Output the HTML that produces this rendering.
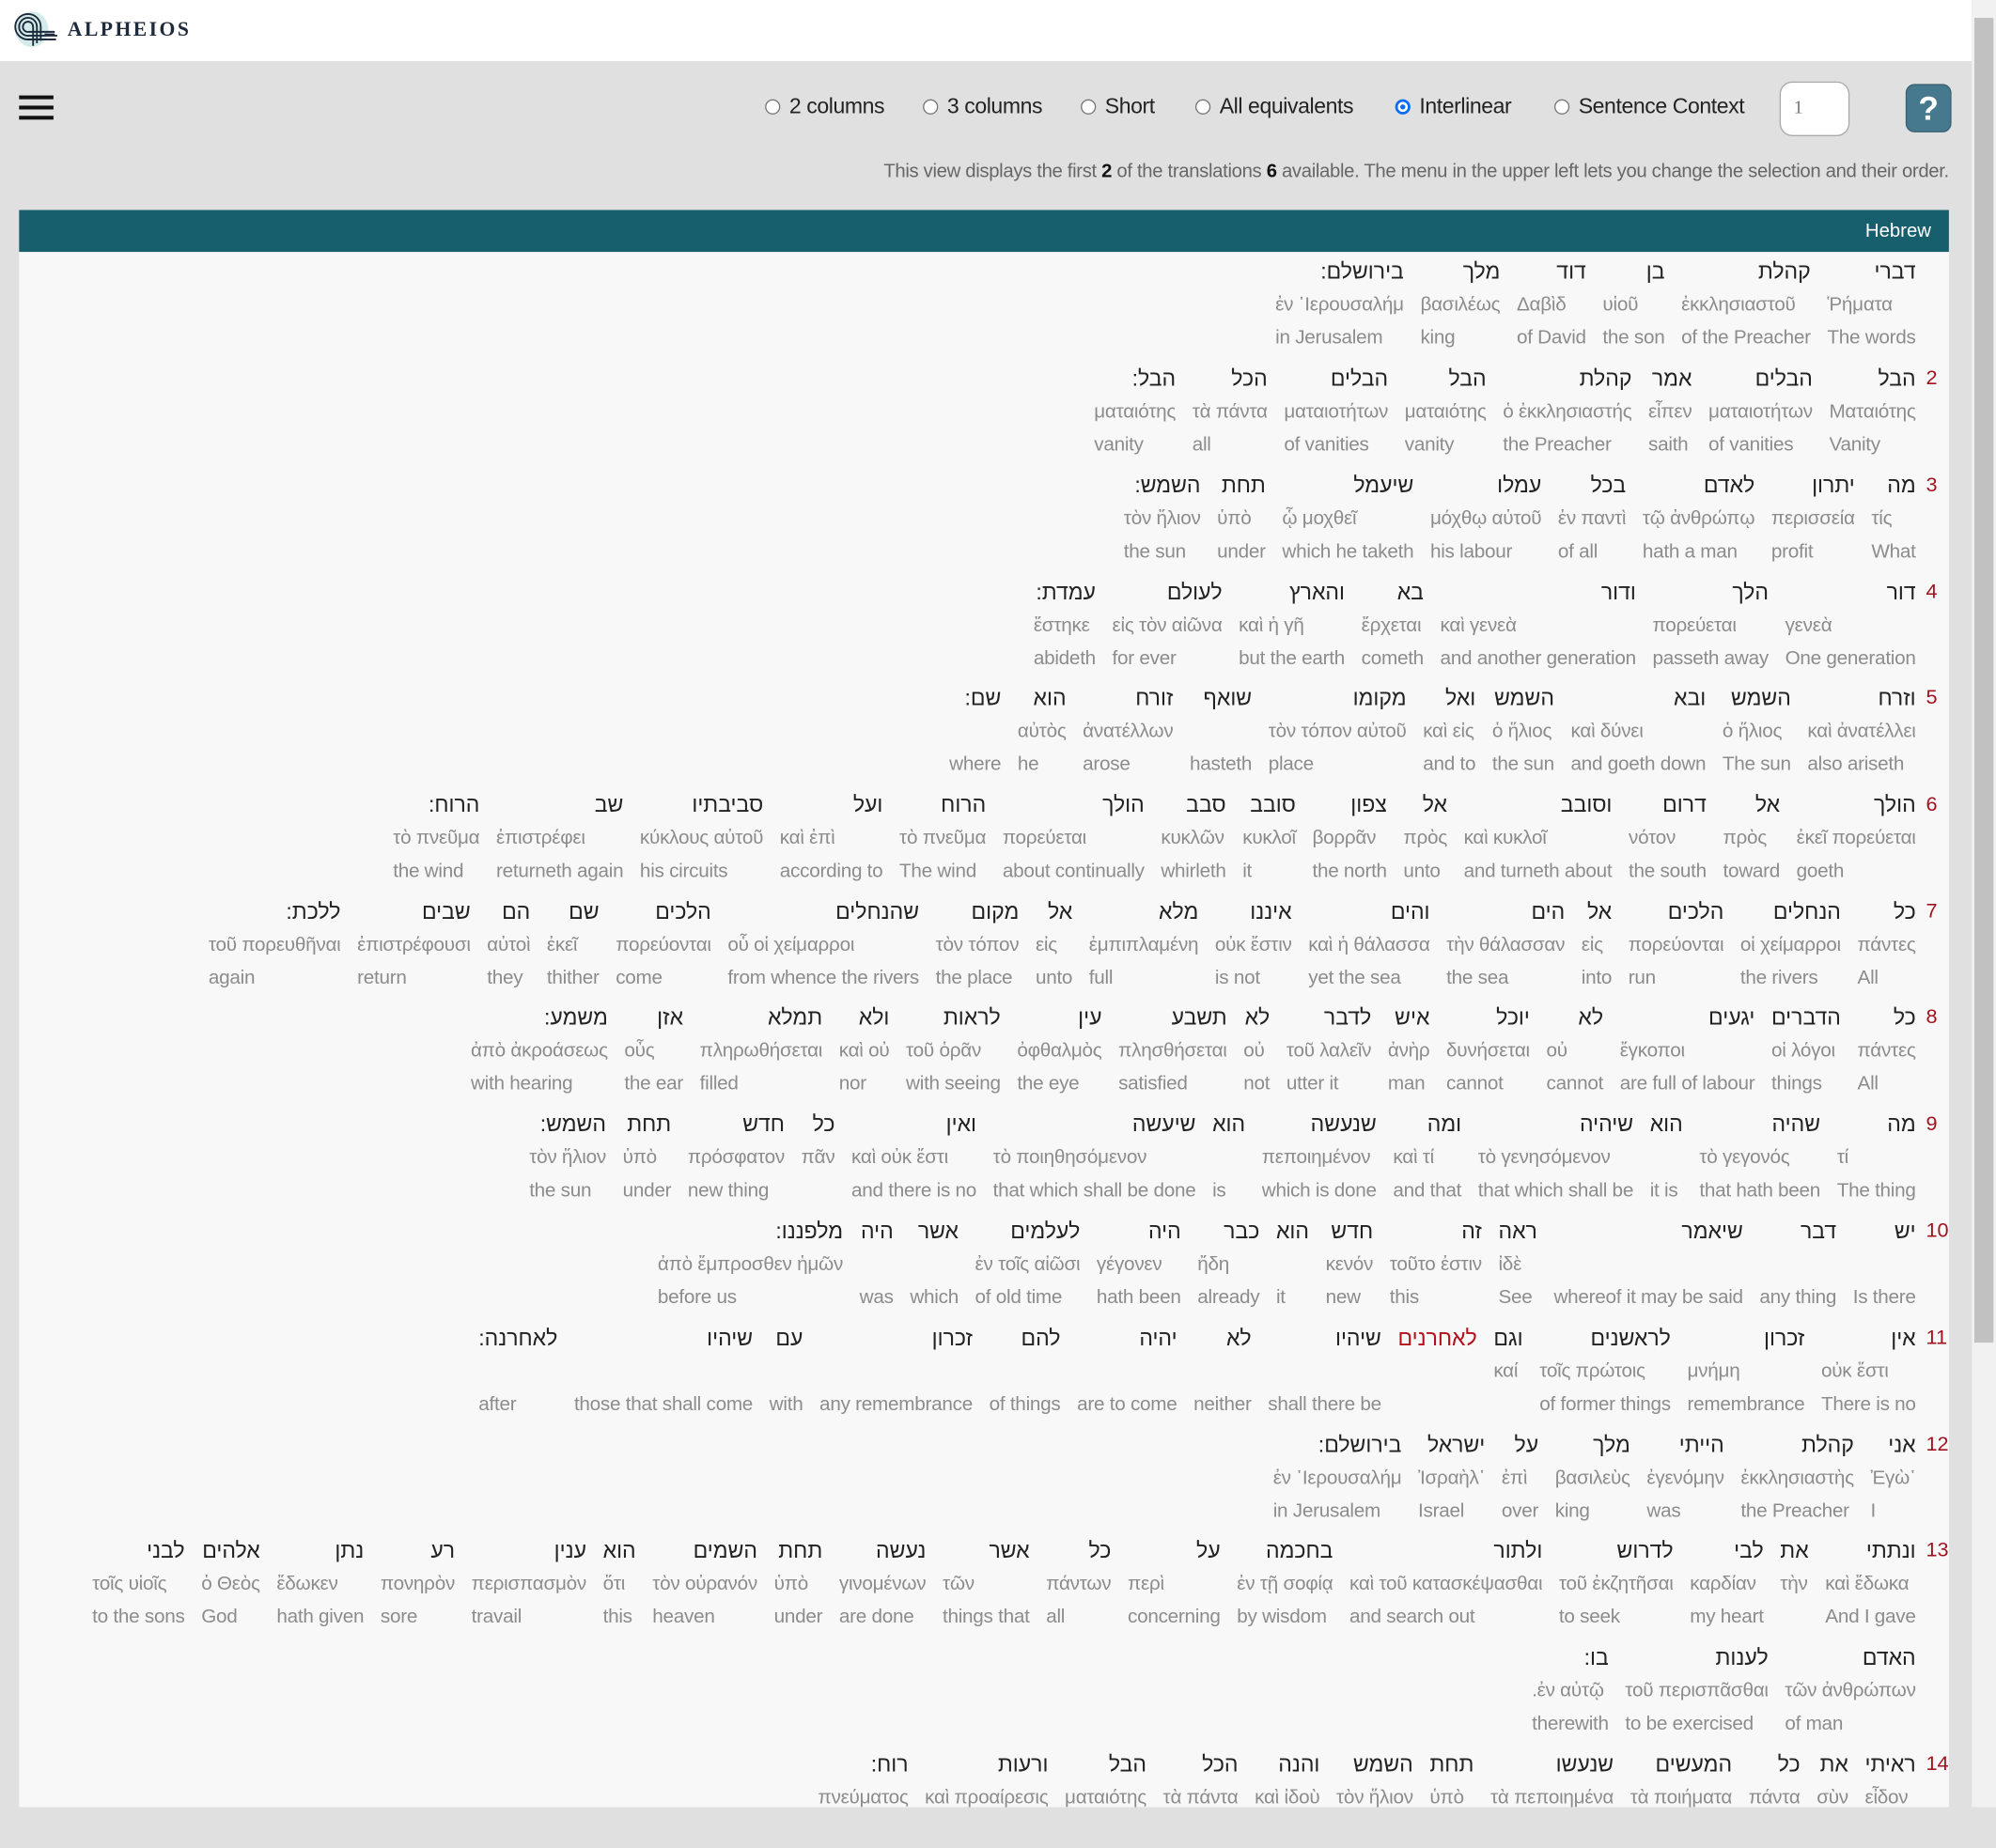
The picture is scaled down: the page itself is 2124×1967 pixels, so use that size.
<!DOCTYPE html>
<html><head><meta charset="utf-8">
<style>
*{margin:0;padding:0;box-sizing:border-box}
html,body{width:2124px;height:1923px;overflow:hidden;background:#e0e0e0}
#w{position:absolute;left:0;top:0;width:1568px;height:1420px;transform:scale(1.35459);transform-origin:0 0;font-family:"Liberation Sans","DejaVu Sans",sans-serif;background:#e0e0e0}
#top{position:absolute;left:0;top:0;width:1549px;height:48px;background:#fff}
.logo{position:absolute;left:53px;top:15px;font-family:"Liberation Serif",serif;font-weight:bold;font-size:16px;letter-spacing:1.8px;color:#1d2b3c}
.ham{position:absolute;left:15px;width:27px;height:2.5px;background:#111}
.rad{position:absolute;top:74px;font-size:17px;color:#222;white-space:nowrap;line-height:20px;letter-spacing:-.3px}
.rad i{display:inline-block;width:12px;height:12px;border:1px solid #777;border-radius:50%;background:#fff;margin-right:7px;vertical-align:-1px}
.rad i.on{border:2px solid #0a6cf5;box-shadow:inset 0 0 0 2px #fff;background:#0a6cf5}
.num{position:absolute;left:1398px;top:64px;width:55px;height:43px;border:1px solid #aaa;border-radius:10px;background:#fff;font-size:15px;color:#777;padding:12px 0 0 10px;font-family:"Liberation Serif",serif}
.help{position:absolute;left:1497px;top:66px;width:36px;height:38px;border-radius:7px;background:#46798d;border:1px solid #3a6272;color:#fff;font-weight:bold;font-size:26px;text-align:center;line-height:36px}
.info{position:absolute;right:37px;top:126px;font-size:15px;letter-spacing:-.25px;color:#666;white-space:nowrap}
.info b{color:#111}
#bar{position:absolute;left:15px;top:165px;width:1516px;height:33px;background:#185f6d;color:#fff;font-size:15px;text-align:right;padding:8px 14px 0 0}
#panel{position:absolute;left:15px;top:198px;width:1516px;height:1222px;background:#f8f8f8}
#sb{position:absolute;left:1549px;top:0;width:19px;height:1420px;background:#f1f1f1}
#thumb{position:absolute;left:1551px;top:14px;width:15px;height:1041px;background:#c1c1c1}
.v{position:absolute;right:63px;display:flex;flex-direction:row-reverse;gap:13px;white-space:nowrap}
.n{position:absolute;left:1513px;font-size:16px;color:#a0141e;line-height:26px}
c{display:flex;flex-direction:column}
h,g,e{display:block;height:26px;line-height:26px;font-weight:normal}
h{font-size:17px;color:#222;text-align:right;direction:rtl}
g,e{font-size:15.3px;color:#8c8c8c;letter-spacing:-.2px}
.r{color:#b3101b}
</style></head><body><div id="w">
<div id="top">
<svg style="position:absolute;left:9px;top:8px" width="40" height="32" viewBox="0 0 40 32"><ellipse cx="16" cy="15" rx="13" ry="14" fill="#d3ebe9"/><g fill="none" stroke="#1d2b3c" stroke-width="1.4"><path d="M20 26V13a7 7 0 0 0-14 0 7 7 0 0 0 8 7h22"/><path d="M17 28V13a4 4 0 0 0-8 0 4 4 0 0 0 5 4h20"/><path d="M23 24V13a10 10 0 0 0-20 0 10 10 0 0 0 10 10h22"/><path d="M26 19h8"/></g></svg>
<div class="logo">ALPHEIOS</div></div>
<div class="ham" style="top:75px"></div><div class="ham" style="top:83px"></div><div class="ham" style="top:91px"></div>
<div class="rad" style="left:601px"><i></i>2 columns</div>
<div class="rad" style="left:725px"><i></i>3 columns</div>
<div class="rad" style="left:849px"><i></i>Short</div>
<div class="rad" style="left:939px"><i></i>All equivalents</div>
<div class="rad" style="left:1096px"><i class="on"></i>Interlinear</div>
<div class="rad" style="left:1221px"><i></i>Sentence Context</div>
<div class="num">1</div>
<div class="help">?</div>
<div class="info">This view displays the first <b>2</b> of the translations <b>6</b> available. The menu in the upper left lets you change the selection and their order.</div>
<div id="bar">Hebrew</div>
<div id="panel"></div>

<div class="v" style="top:201px"><c><h>דברי</h><g>Ῥήματα</g><e>The words</e></c><c><h>קהלת</h><g>ἐκκλησιαστοῦ</g><e>of the Preacher</e></c><c><h>בן</h><g>υἱοῦ</g><e>the son</e></c><c><h>דוד</h><g>Δαβὶδ</g><e>of David</e></c><c><h>מלך</h><g>βασιλέως</g><e>king</e></c><c><h>בירושלם:</h><g>ἐν ῾Ιερουσαλήμ</g><e>in Jerusalem</e></c></div>

<div class="n" style="top:285px">2</div>
<div class="v" style="top:285px"><c><h>הבל</h><g>Ματαιότης</g><e>Vanity</e></c><c><h>הבלים</h><g>ματαιοτήτων</g><e>of vanities</e></c><c><h>אמר</h><g>εἶπεν</g><e>saith</e></c><c><h>קהלת</h><g>ὁ ἐκκλησιαστής</g><e>the Preacher</e></c><c><h>הבל</h><g>ματαιότης</g><e>vanity</e></c><c><h>הבלים</h><g>ματαιοτήτων</g><e>of vanities</e></c><c><h>הכל</h><g>τὰ πάντα</g><e>all</e></c><c><h>הבל:</h><g>ματαιότης</g><e>vanity</e></c></div>

<div class="n" style="top:369px">3</div>
<div class="v" style="top:369px"><c><h>מה</h><g>τίς</g><e>What</e></c><c><h>יתרון</h><g>περισσεία</g><e>profit</e></c><c><h>לאדם</h><g>τῷ ἀνθρώπῳ</g><e>hath a man</e></c><c><h>בכל</h><g>ἐν παντὶ</g><e>of all</e></c><c><h>עמלו</h><g>μόχθῳ αὐτοῦ</g><e>his labour</e></c><c><h>שיעמל</h><g>ᾧ μοχθεῖ</g><e>which he taketh</e></c><c><h>תחת</h><g>ὑπὸ</g><e>under</e></c><c><h>השמש:</h><g>τὸν ἥλιον</g><e>the sun</e></c></div>

<div class="n" style="top:453px">4</div>
<div class="v" style="top:453px"><c><h>דור</h><g>γενεὰ</g><e>One generation</e></c><c><h>הלך</h><g>πορεύεται</g><e>passeth away</e></c><c><h>ודור</h><g>καὶ γενεὰ</g><e>and another generation</e></c><c><h>בא</h><g>ἔρχεται</g><e>cometh</e></c><c><h>והארץ</h><g>καὶ ἡ γῆ</g><e>but the earth</e></c><c><h>לעולם</h><g>εἰς τὸν αἰῶνα</g><e>for ever</e></c><c><h>עמדת:</h><g>ἕστηκε</g><e>abideth</e></c></div>

<div class="n" style="top:536px">5</div>
<div class="v" style="top:536px"><c><h>וזרח</h><g>καὶ ἀνατέλλει</g><e>also ariseth</e></c><c><h>השמש</h><g>ὁ ἥλιος</g><e>The sun</e></c><c><h>ובא</h><g>καὶ δύνει</g><e>and goeth down</e></c><c><h>השמש</h><g>ὁ ἥλιος</g><e>the sun</e></c><c><h>ואל</h><g>καὶ εἰς</g><e>and to</e></c><c><h>מקומו</h><g>τὸν τόπον αὐτοῦ</g><e>place</e></c><c><h>שואף</h><g></g><e>hasteth</e></c><c><h>זורח</h><g>ἀνατέλλων</g><e>arose</e></c><c><h>הוא</h><g>αὐτὸς</g><e>he</e></c><c><h>שם:</h><g></g><e>where</e></c></div>

<div class="n" style="top:620px">6</div>
<div class="v" style="top:620px"><c><h>הולך</h><g>ἐκεῖ πορεύεται</g><e>goeth</e></c><c><h>אל</h><g>πρὸς</g><e>toward</e></c><c><h>דרום</h><g>νότον</g><e>the south</e></c><c><h>וסובב</h><g>καὶ κυκλοῖ</g><e>and turneth about</e></c><c><h>אל</h><g>πρὸς</g><e>unto</e></c><c><h>צפון</h><g>βορρᾶν</g><e>the north</e></c><c><h>סובב</h><g>κυκλοῖ</g><e>it</e></c><c><h>סבב</h><g>κυκλῶν</g><e>whirleth</e></c><c><h>הולך</h><g>πορεύεται</g><e>about continually</e></c><c><h>הרוח</h><g>τὸ πνεῦμα</g><e>The wind</e></c><c><h>ועל</h><g>καὶ ἐπὶ</g><e>according to</e></c><c><h>סביבתיו</h><g>κύκλους αὐτοῦ</g><e>his circuits</e></c><c><h>שב</h><g>ἐπιστρέφει</g><e>returneth again</e></c><c><h>הרוח:</h><g>τὸ πνεῦμα</g><e>the wind</e></c></div>

<div class="n" style="top:704px">7</div>
<div class="v" style="top:704px"><c><h>כל</h><g>πάντες</g><e>All</e></c><c><h>הנחלים</h><g>οἱ χείμαρροι</g><e>the rivers</e></c><c><h>הלכים</h><g>πορεύονται</g><e>run</e></c><c><h>אל</h><g>εἰς</g><e>into</e></c><c><h>הים</h><g>τὴν θάλασσαν</g><e>the sea</e></c><c><h>והים</h><g>καὶ ἡ θάλασσα</g><e>yet the sea</e></c><c><h>איננו</h><g>οὐκ ἔστιν</g><e>is not</e></c><c><h>מלא</h><g>ἐμπιπλαμένη</g><e>full</e></c><c><h>אל</h><g>εἰς</g><e>unto</e></c><c><h>מקום</h><g>τὸν τόπον</g><e>the place</e></c><c><h>שהנחלים</h><g>οὗ οἱ χείμαρροι</g><e>from whence the rivers</e></c><c><h>הלכים</h><g>πορεύονται</g><e>come</e></c><c><h>שם</h><g>ἐκεῖ</g><e>thither</e></c><c><h>הם</h><g>αὐτοὶ</g><e>they</e></c><c><h>שבים</h><g>ἐπιστρέφουσι</g><e>return</e></c><c><h>ללכת:</h><g>τοῦ πορευθῆναι</g><e>again</e></c></div>

<div class="n" style="top:787px">8</div>
<div class="v" style="top:787px"><c><h>כל</h><g>πάντες</g><e>All</e></c><c><h>הדברים</h><g>οἱ λόγοι</g><e>things</e></c><c><h>יגעים</h><g>ἔγκοποι</g><e>are full of labour</e></c><c><h>לא</h><g>οὐ</g><e>cannot</e></c><c><h>יוכל</h><g>δυνήσεται</g><e>cannot</e></c><c><h>איש</h><g>ἀνὴρ</g><e>man</e></c><c><h>לדבר</h><g>τοῦ λαλεῖν</g><e>utter it</e></c><c><h>לא</h><g>οὐ</g><e>not</e></c><c><h>תשבע</h><g>πλησθήσεται</g><e>satisfied</e></c><c><h>עין</h><g>ὀφθαλμὸς</g><e>the eye</e></c><c><h>לראות</h><g>τοῦ ὁρᾶν</g><e>with seeing</e></c><c><h>ולא</h><g>καὶ οὐ</g><e>nor</e></c><c><h>תמלא</h><g>πληρωθήσεται</g><e>filled</e></c><c><h>אזן</h><g>οὖς</g><e>the ear</e></c><c><h>משמע:</h><g>ἀπὸ ἀκροάσεως</g><e>with hearing</e></c></div>

<div class="n" style="top:871px">9</div>
<div class="v" style="top:871px"><c><h>מה</h><g>τί</g><e>The thing</e></c><c><h>שהיה</h><g>τὸ γεγονός</g><e>that hath been</e></c><c><h>הוא</h><g></g><e>it is</e></c><c><h>שיהיה</h><g>τὸ γενησόμενον</g><e>that which shall be</e></c><c><h>ומה</h><g>καὶ τί</g><e>and that</e></c><c><h>שנעשה</h><g>πεποιημένον</g><e>which is done</e></c><c><h>הוא</h><g></g><e>is</e></c><c><h>שיעשה</h><g>τὸ ποιηθησόμενον</g><e>that which shall be done</e></c><c><h>ואין</h><g>καὶ οὐκ ἔστι</g><e>and there is no</e></c><c><h>כל</h><g>πᾶν</g><e></e></c><c><h>חדש</h><g>πρόσφατον</g><e>new thing</e></c><c><h>תחת</h><g>ὑπὸ</g><e>under</e></c><c><h>השמש:</h><g>τὸν ἥλιον</g><e>the sun</e></c></div>

<div class="n" style="top:955px">10</div>
<div class="v" style="top:955px"><c><h>יש</h><g></g><e>Is there</e></c><c><h>דבר</h><g></g><e>any thing</e></c><c><h>שיאמר</h><g></g><e>whereof it may be said</e></c><c><h>ראה</h><g>ἰδὲ</g><e>See</e></c><c><h>זה</h><g>τοῦτο ἐστιν</g><e>this</e></c><c><h>חדש</h><g>κενόν</g><e>new</e></c><c><h>הוא</h><g></g><e>it</e></c><c><h>כבר</h><g>ἤδη</g><e>already</e></c><c><h>היה</h><g>γέγονεν</g><e>hath been</e></c><c><h>לעלמים</h><g>ἐν τοῖς αἰῶσι</g><e>of old time</e></c><c><h>אשר</h><g></g><e>which</e></c><c><h>היה</h><g></g><e>was</e></c><c><h>מלפננו:</h><g>ἀπὸ ἔμπροσθεν ἡμῶν</g><e>before us</e></c></div>

<div class="n" style="top:1039px">11</div>
<div class="v" style="top:1039px"><c><h>אין</h><g>οὐκ ἔστι</g><e>There is no</e></c><c><h>זכרון</h><g>μνήμη</g><e>remembrance</e></c><c><h>לראשנים</h><g>τοῖς πρώτοις</g><e>of former things</e></c><c><h>וגם</h><g>καί</g><e></e></c><c><h class="r">לאחרנים</h><g></g><e></e></c><c><h>שיהיו</h><g></g><e>shall there be</e></c><c><h>לא</h><g></g><e>neither</e></c><c><h>יהיה</h><g></g><e>are to come</e></c><c><h>להם</h><g></g><e>of things</e></c><c><h>זכרון</h><g></g><e>any remembrance</e></c><c><h>עם</h><g></g><e>with</e></c><c><h>שיהיו</h><g></g><e>those that shall come</e></c><c><h>לאחרנה:</h><g></g><e>after</e></c></div>

<div class="n" style="top:1123px">12</div>
<div class="v" style="top:1123px"><c><h>אני</h><g>Ἐγὼ῾</g><e>I</e></c><c><h>קהלת</h><g>ἐκκλησιαστὴς</g><e>the Preacher</e></c><c><h>הייתי</h><g>ἐγενόμην</g><e>was</e></c><c><h>מלך</h><g>βασιλεὺς</g><e>king</e></c><c><h>על</h><g>ἐπὶ</g><e>over</e></c><c><h>ישראל</h><g>Ἰσραὴλ῾</g><e>Israel</e></c><c><h>בירושלם:</h><g>ἐν ῾Ιερουσαλήμ</g><e>in Jerusalem</e></c></div>

<div class="n" style="top:1206px">13</div>
<div class="v" style="top:1206px"><c><h>ונתתי</h><g>καὶ ἔδωκα</g><e>And I gave</e></c><c><h>את</h><g>τὴν</g><e></e></c><c><h>לבי</h><g>καρδίαν</g><e>my heart</e></c><c><h>לדרוש</h><g>τοῦ ἐκζητῆσαι</g><e>to seek</e></c><c><h>ולתור</h><g>καὶ τοῦ κατασκέψασθαι</g><e>and search out</e></c><c><h>בחכמה</h><g>ἐν τῇ σοφίᾳ</g><e>by wisdom</e></c><c><h>על</h><g>περὶ</g><e>concerning</e></c><c><h>כל</h><g>πάντων</g><e>all</e></c><c><h>אשר</h><g>τῶν</g><e>things that</e></c><c><h>נעשה</h><g>γινομένων</g><e>are done</e></c><c><h>תחת</h><g>ὑπὸ</g><e>under</e></c><c><h>השמים</h><g>τὸν οὐρανόν</g><e>heaven</e></c><c><h>הוא</h><g>ὅτι</g><e>this</e></c><c><h>ענין</h><g>περισπασμὸν</g><e>travail</e></c><c><h>רע</h><g>πονηρὸν</g><e>sore</e></c><c><h>נתן</h><g>ἔδωκεν</g><e>hath given</e></c><c><h>אלהים</h><g>ὁ Θεὸς</g><e>God</e></c><c><h>לבני</h><g>τοῖς υἱοῖς</g><e>to the sons</e></c></div>
<div class="v" style="top:1290px"><c><h>האדם</h><g>τῶν ἀνθρώπων</g><e>of man</e></c><c><h>לענות</h><g>τοῦ περισπᾶσθαι</g><e>to be exercised</e></c><c><h>בו:</h><g>.ἐν αὐτῷ</g><e>therewith</e></c></div>

<div class="n" style="top:1374px">14</div>
<div class="v" style="top:1374px"><c><h>ראיתי</h><g>εἶδον</g><e></e></c><c><h>את</h><g>σὺν</g><e></e></c><c><h>כל</h><g>πάντα</g><e></e></c><c><h>המעשים</h><g>τὰ ποιήματα</g><e></e></c><c><h>שנעשו</h><g>τὰ πεποιημένα</g><e></e></c><c><h>תחת</h><g>ὑπὸ</g><e></e></c><c><h>השמש</h><g>τὸν ἥλιον</g><e></e></c><c><h>והנה</h><g>καὶ ἰδοὺ</g><e></e></c><c><h>הכל</h><g>τὰ πάντα</g><e></e></c><c><h>הבל</h><g>ματαιότης</g><e></e></c><c><h>ורעות</h><g>καὶ προαίρεσις</g><e></e></c><c><h>רוח:</h><g>πνεύματος</g><e></e></c></div>

<div id="sb"></div><div id="thumb"></div>
</div></body></html>
